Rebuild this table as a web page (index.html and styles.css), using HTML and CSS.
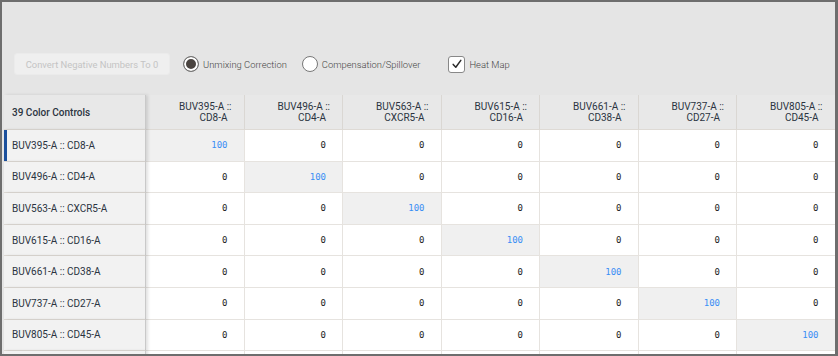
FILE: index.html
```html
<!DOCTYPE html>
<html>
<head>
<meta charset="utf-8">
<link rel="stylesheet" href="styles.css">
</head>
<body>
<div class="frame">
  <div class="toolbar">
    <button class="btn" type="button">Convert Negative Numbers To 0</button>
    <label class="opt opt-radio"><span class="radio on"></span><span>Unmixing Correction</span></label>
    <label class="opt opt-radio2"><span class="radio"></span><span>Compensation/Spillover</span></label>
    <label class="opt opt-check"><span class="check"><svg width="12" height="12" viewBox="0 0 12 12"><path d="M2.2 6.4 L4.8 9.2 L9.8 2.4" fill="none" stroke="#2a2a2a" stroke-width="1.5" stroke-linecap="round" stroke-linejoin="round"/></svg></span><span>Heat Map</span></label>
  </div>
  <div class="grid">
    <div class="hc first">39 Color Controls</div>
    <div class="hc"><span class="l1">BUV395-A ::</span><span>CD8-A</span></div>
    <div class="hc"><span class="l1">BUV496-A ::</span><span>CD4-A</span></div>
    <div class="hc"><span class="l1">BUV563-A ::</span><span>CXCR5-A</span></div>
    <div class="hc"><span class="l1">BUV615-A ::</span><span>CD16-A</span></div>
    <div class="hc"><span class="l1">BUV661-A ::</span><span>CD38-A</span></div>
    <div class="hc"><span class="l1">BUV737-A ::</span><span>CD27-A</span></div>
    <div class="hc"><span class="l1">BUV805-A ::</span><span>CD45-A</span></div>

    <div class="lc sel">BUV395-A :: CD8-A</div>
    <div class="vc diag">100</div><div class="vc">0</div><div class="vc">0</div><div class="vc">0</div><div class="vc">0</div><div class="vc">0</div><div class="vc">0</div>

    <div class="lc">BUV496-A :: CD4-A</div>
    <div class="vc">0</div><div class="vc diag">100</div><div class="vc">0</div><div class="vc">0</div><div class="vc">0</div><div class="vc">0</div><div class="vc">0</div>

    <div class="lc">BUV563-A :: CXCR5-A</div>
    <div class="vc">0</div><div class="vc">0</div><div class="vc diag">100</div><div class="vc">0</div><div class="vc">0</div><div class="vc">0</div><div class="vc">0</div>

    <div class="lc">BUV615-A :: CD16-A</div>
    <div class="vc">0</div><div class="vc">0</div><div class="vc">0</div><div class="vc diag">100</div><div class="vc">0</div><div class="vc">0</div><div class="vc">0</div>

    <div class="lc">BUV661-A :: CD38-A</div>
    <div class="vc">0</div><div class="vc">0</div><div class="vc">0</div><div class="vc">0</div><div class="vc diag">100</div><div class="vc">0</div><div class="vc">0</div>

    <div class="lc">BUV737-A :: CD27-A</div>
    <div class="vc">0</div><div class="vc">0</div><div class="vc">0</div><div class="vc">0</div><div class="vc">0</div><div class="vc diag">100</div><div class="vc">0</div>

    <div class="lc">BUV805-A :: CD45-A</div>
    <div class="vc">0</div><div class="vc">0</div><div class="vc">0</div><div class="vc">0</div><div class="vc">0</div><div class="vc">0</div><div class="vc diag">100</div>

    <div class="lc"></div>
    <div class="vc"></div><div class="vc"></div><div class="vc"></div><div class="vc"></div><div class="vc"></div><div class="vc"></div><div class="vc"></div>
  </div>
</div>
</body>
</html>
```

FILE: styles.css
```css
html, body {
  margin: 0;
  padding: 0;
}
body {
  background: #6e6e6e;
  width: 838px;
  height: 356px;
  overflow: hidden;
  font-family: Roboto, "Liberation Sans", sans-serif;
}
.frame {
  margin: 2px 3px 2px 2px;
  height: 352px;
  background: #e5e5e5;
  overflow: hidden;
}
.toolbar {
  display: flex;
  align-items: center;
  height: 22px;
  padding: 51px 0 0 12px;
  margin-bottom: 20px;
}
.btn {
  width: 156px;
  height: 22px;
  padding: 0;
  border: 1px solid #ebebeb;
  border-radius: 3px;
  background: #efefef;
  color: #c4c4c4;
  font-family: Roboto, "Liberation Sans", sans-serif;
  font-size: 9.4px;
  margin-right: 13px;
}
.opt {
  display: flex;
  align-items: center;
  font-size: 9.4px;
  font-weight: 300;
  color: #444;
}
.opt-radio { margin-right: 15px; }
.opt-radio2 { margin-right: 28px; }
.radio {
  box-sizing: border-box;
  width: 16px;
  height: 16px;
  border-radius: 50%;
  border: 1px solid #777;
  background: #fff;
  margin-right: 4px;
}
.radio.on {
  background: #4a4440;
  box-shadow: inset 0 0 0 2px #fff;
}
.check {
  box-sizing: border-box;
  width: 17px;
  height: 17px;
  border: 1px solid #888;
  border-radius: 3px;
  background: #fff;
  display: flex;
  align-items: center;
  justify-content: center;
  margin-right: 4px;
}
.grid {
  display: grid;
  grid-template-columns: 142px repeat(7, 98.5px);
  grid-template-rows: 35px repeat(8, 31.6px);
  margin-left: 2px;
  width: 832px;
}
.hc, .lc, .vc {
  box-sizing: border-box;
  border-bottom: 1px solid #dedad5;
  font-size: 10px;
  color: #2b3441;
}
.hc {
  background: #e8e8e8;
  border-right: 1px solid #dad7d3;
  display: flex;
  flex-direction: column;
  align-items: flex-end;
  justify-content: center;
  padding-right: 16px;
  line-height: 11px;
}
.hc .l1 { margin-right: -4px; }
.hc.first {
  align-items: flex-start;
  padding-left: 8px;
  font-weight: 500;
  border-right: 1px solid #c9c9c9;
  box-shadow: 2px 0 3px rgba(0,0,0,0.12);
  position: relative;
  z-index: 1;
}
.lc {
  background: #f2f2f2;
  display: flex;
  align-items: center;
  padding-left: 8px;
  border-right: 1px solid #c9c9c9;
  box-shadow: 2px 0 3px rgba(0,0,0,0.12);
  position: relative;
  z-index: 1;
}
.lc.sel {
  box-shadow: inset 3px 0 0 #1b4f9c, 2px 0 3px rgba(0,0,0,0.12);
}
.vc {
  background: #fff;
  border-right: 1px solid #e6e3df;
  border-bottom-color: #e6e3df;
  display: flex;
  align-items: center;
  justify-content: flex-end;
  padding-right: 16px;
  font-family: "DejaVu Sans Mono", monospace;
  font-size: 9px;
  color: #222;
}
.vc.diag {
  background: #f0f0f0;
  color: #3a8ef5;
}
```
